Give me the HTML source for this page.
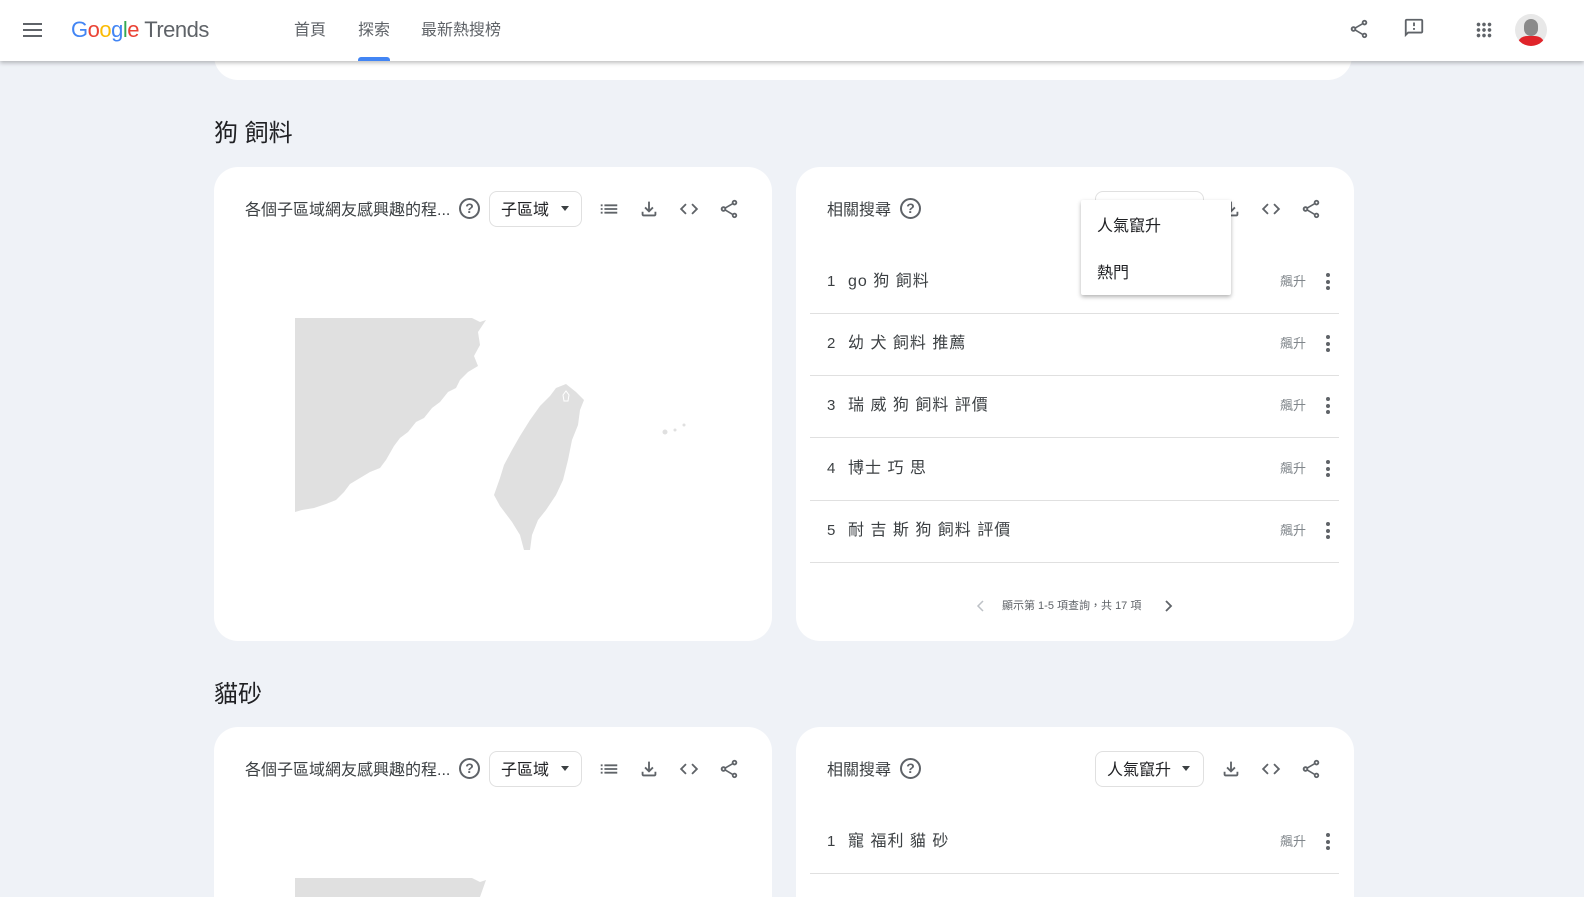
<!DOCTYPE html>
<html><head><meta charset="utf-8"><style>
*{margin:0;padding:0;box-sizing:border-box}
html{width:1584px;height:897px;overflow:hidden}
body{width:1584px;height:897px;overflow:hidden;background:#eff2f7;font-family:"Liberation Sans","Noto Sans CJK TC",sans-serif;color:#202124;position:relative;line-height:1.2}
.a{position:absolute}
.hdr{left:0;top:0;width:1584px;height:61px;background:#fff;box-shadow:0 2px 4px rgba(0,0,0,.25);z-index:5}
.card{background:#fff;border-radius:24px}
.ic{position:absolute;width:22px;height:22px;fill:#5f6368}
.sel{position:absolute;border:1px solid #e0e0e0;border-radius:8px;height:36px;font-size:16px;padding:9px 0 0 11px;line-height:20px}
.tri{position:absolute;width:0;height:0;border-left:4.5px solid transparent;border-right:4.5px solid transparent;border-top:5px solid #3c4043}
.t16{font-size:16px;color:#3c4043;line-height:20px;transform:translateY(3px)}
.row{position:absolute;left:810px;width:529px;height:62px;border-bottom:1px solid #e0e0e0}
.row .n{position:absolute;left:17px;top:20px;font-size:15px;line-height:20px;color:#3c4043}
.row .q{position:absolute;left:38px;top:20px;font-size:16px;line-height:20px;color:#3c4043;letter-spacing:1px}
.row .s{position:absolute;left:470px;top:21px;font-size:13px;line-height:18px;color:#80868b}
.dots{position:absolute;left:516px;top:21px;width:5px}
.dots i{display:block;width:4px;height:4px;border-radius:2px;background:#5f6368;margin-bottom:2.5px}
.help{position:absolute;width:21px;height:21px;border:2px solid #5f6368;border-radius:50%;font-size:14px;font-weight:bold;color:#5f6368;text-align:center;line-height:17px}
</style></head><body>
<div class="a hdr">
 <div class="a" style="left:23px;top:23px;width:19px"><div style="height:2px;background:#5f6368;margin-bottom:4px"></div><div style="height:2px;background:#5f6368;margin-bottom:4px"></div><div style="height:2px;background:#5f6368"></div></div>
 <div class="a" style="left:71px;top:17px;font-size:22px;letter-spacing:-0.5px"><span style="color:#4285f4">G</span><span style="color:#ea4335">o</span><span style="color:#fbbc05">o</span><span style="color:#4285f4">g</span><span style="color:#34a853">l</span><span style="color:#ea4335">e</span> <span style="color:#5f6368">Trends</span></div>
 <div class="a t16" style="left:294px;top:18px;color:#5f6368">首頁</div>
 <div class="a t16" style="left:358px;top:18px;color:#5f6368">探索</div>
 <div class="a" style="left:358px;top:57px;width:32px;height:4px;background:#4285f4;border-radius:3px 3px 0 0"></div>
 <div class="a t16" style="left:421px;top:18px;color:#5f6368">最新熱搜榜</div>
 <svg class="ic" style="left:1348px;top:18px" viewBox="0 0 24 24"><path d="M18 16.08c-.76 0-1.44.3-1.96.77L8.91 12.7c.05-.23.09-.46.09-.7s-.04-.47-.09-.7l7.05-4.11c.54.5 1.25.81 2.04.81 1.66 0 3-1.34 3-3s-1.34-3-3-3-3 1.34-3 3c0 .24.04.47.09.7L8.04 9.81C7.5 9.31 6.79 9 6 9c-1.66 0-3 1.34-3 3s1.34 3 3 3c.79 0 1.5-.31 2.04-.81l7.12 4.16c-.05.21-.08.43-.08.65 0 1.61 1.31 2.92 2.92 2.92s2.92-1.31 2.92-2.92-1.31-2.92-2.92-2.92zM18 4c.55 0 1 .45 1 1s-.45 1-1 1-1-.45-1-1 .45-1 1-1zM6 13c-.55 0-1-.45-1-1s.45-1 1-1 1 .45 1 1-.45 1-1 1zm12 7.02c-.55 0-1-.45-1-1s.45-1 1-1 1 .45 1 1-.45 1-1 1z"/></svg>
 <svg class="ic" style="left:1403px;top:17px" viewBox="0 0 24 24"><path d="M20 2H4c-1.1 0-1.99.9-1.99 2L2 22l4-4h14c1.1 0 2-.9 2-2V4c0-1.1-.9-2-2-2zm0 14H5.17L4 17.17V4h16v12zM11 12h2v2h-2zm0-6h2v4h-2z"/></svg>
 <svg class="ic" style="left:1473px;top:19px" viewBox="0 0 24 24"><path d="M6 8c1.1 0 2-.9 2-2s-.9-2-2-2-2 .9-2 2 .9 2 2 2zm6 12c1.1 0 2-.9 2-2s-.9-2-2-2-2 .9-2 2 .9 2 2 2zm-6 0c1.1 0 2-.9 2-2s-.9-2-2-2-2 .9-2 2 .9 2 2 2zm0-6c1.1 0 2-.9 2-2s-.9-2-2-2-2 .9-2 2 .9 2 2 2zm6 0c1.1 0 2-.9 2-2s-.9-2-2-2-2 .9-2 2 .9 2 2 2zm4-8c0 1.1.9 2 2 2s2-.9 2-2-.9-2-2-2-2 .9-2 2zm-4 2c1.1 0 2-.9 2-2s-.9-2-2-2-2 .9-2 2 .9 2 2 2zm6 6c1.1 0 2-.9 2-2s-.9-2-2-2-2 .9-2 2 .9 2 2 2zm0 6c1.1 0 2-.9 2-2s-.9-2-2-2-2 .9-2 2 .9 2 2 2z"/></svg>
 <div class="a" style="left:1515px;top:14px;width:32px;height:32px;border-radius:50%;overflow:hidden;background:#e8e8e8">
  <div class="a" style="left:9px;top:5px;width:14px;height:17px;border-radius:7px;background:#8a8a8a"></div>
  <div class="a" style="left:2px;top:22px;width:28px;height:14px;border-radius:10px 10px 0 0;background:#e0242a"></div>
 </div>
</div>

<div class="a card" style="left:214px;top:20px;width:1138px;height:60px"></div>

<div class="a" style="left:214px;top:119px;font-size:24px;line-height:30px;color:#202124">狗 飼料</div>
<div class="a" style="left:214px;top:680px;font-size:24px;line-height:30px;color:#202124">貓砂</div>

<div class="a card" style="left:214px;top:167px;width:558px;height:474px"></div>
<div class="a card" style="left:796px;top:167px;width:558px;height:474px"></div>
<div class="a card" style="left:214px;top:727px;width:558px;height:200px"></div>
<div class="a card" style="left:796px;top:727px;width:558px;height:200px"></div>

<div class="a t16" style="left:245px;top:198px">各個子區域網友感興趣的程...</div>
<div class="help" style="left:459px;top:198px">?</div>
<div class="sel" style="left:489px;top:191px;width:93px">子區域</div><div class="tri" style="left:561px;top:206px"></div>
<svg class="ic" style="left:598px;top:198px" viewBox="0 0 24 24"><path d="M3 13h2v-2H3v2zm0 4h2v-2H3v2zm0-8h2V7H3v2zm4 4h14v-2H7v2zm0 4h14v-2H7v2zM7 7v2h14V7H7z"/></svg>
<svg class="ic" style="left:638px;top:198px" viewBox="0 0 24 24"><path d="M18 15v3H6v-3H4v3c0 1.1.9 2 2 2h12c1.1 0 2-.9 2-2v-3h-2zm-1-4l-1.41-1.41L13 12.17V4h-2v8.17L8.41 9.59 7 11l5 5 5-5z"/></svg>
<svg class="ic" style="left:678px;top:198px" viewBox="0 0 24 24"><path d="M9.4 16.6L4.8 12l4.6-4.6L8 6l-6 6 6 6 1.4-1.4zm5.2 0l4.6-4.6-4.6-4.6L16 6l6 6-6 6-1.4-1.4z"/></svg>
<svg class="ic" style="left:718px;top:198px" viewBox="0 0 24 24"><path d="M18 16.08c-.76 0-1.44.3-1.96.77L8.91 12.7c.05-.23.09-.46.09-.7s-.04-.47-.09-.7l7.05-4.11c.54.5 1.25.81 2.04.81 1.66 0 3-1.34 3-3s-1.34-3-3-3-3 1.34-3 3c0 .24.04.47.09.7L8.04 9.81C7.5 9.31 6.79 9 6 9c-1.66 0-3 1.34-3 3s1.34 3 3 3c.79 0 1.5-.31 2.04-.81l7.12 4.16c-.05.21-.08.43-.08.65 0 1.61 1.31 2.92 2.92 2.92s2.92-1.31 2.92-2.92-1.31-2.92-2.92-2.92zM18 4c.55 0 1 .45 1 1s-.45 1-1 1-1-.45-1-1 .45-1 1-1zM6 13c-.55 0-1-.45-1-1s.45-1 1-1 1 .45 1 1-.45 1-1 1zm12 7.02c-.55 0-1-.45-1-1s.45-1 1-1 1 .45 1 1-.45 1-1 1z"/></svg>

<div class="a t16" style="left:245px;top:758px">各個子區域網友感興趣的程...</div>
<div class="help" style="left:459px;top:758px">?</div>
<div class="sel" style="left:489px;top:751px;width:93px">子區域</div><div class="tri" style="left:561px;top:766px"></div>
<svg class="ic" style="left:598px;top:758px" viewBox="0 0 24 24"><path d="M3 13h2v-2H3v2zm0 4h2v-2H3v2zm0-8h2V7H3v2zm4 4h14v-2H7v2zm0 4h14v-2H7v2zM7 7v2h14V7H7z"/></svg>
<svg class="ic" style="left:638px;top:758px" viewBox="0 0 24 24"><path d="M18 15v3H6v-3H4v3c0 1.1.9 2 2 2h12c1.1 0 2-.9 2-2v-3h-2zm-1-4l-1.41-1.41L13 12.17V4h-2v8.17L8.41 9.59 7 11l5 5 5-5z"/></svg>
<svg class="ic" style="left:678px;top:758px" viewBox="0 0 24 24"><path d="M9.4 16.6L4.8 12l4.6-4.6L8 6l-6 6 6 6 1.4-1.4zm5.2 0l4.6-4.6-4.6-4.6L16 6l6 6-6 6-1.4-1.4z"/></svg>
<svg class="ic" style="left:718px;top:758px" viewBox="0 0 24 24"><path d="M18 16.08c-.76 0-1.44.3-1.96.77L8.91 12.7c.05-.23.09-.46.09-.7s-.04-.47-.09-.7l7.05-4.11c.54.5 1.25.81 2.04.81 1.66 0 3-1.34 3-3s-1.34-3-3-3-3 1.34-3 3c0 .24.04.47.09.7L8.04 9.81C7.5 9.31 6.79 9 6 9c-1.66 0-3 1.34-3 3s1.34 3 3 3c.79 0 1.5-.31 2.04-.81l7.12 4.16c-.05.21-.08.43-.08.65 0 1.61 1.31 2.92 2.92 2.92s2.92-1.31 2.92-2.92-1.31-2.92-2.92-2.92zM18 4c.55 0 1 .45 1 1s-.45 1-1 1-1-.45-1-1 .45-1 1-1zM6 13c-.55 0-1-.45-1-1s.45-1 1-1 1 .45 1 1-.45 1-1 1zm12 7.02c-.55 0-1-.45-1-1s.45-1 1-1 1 .45 1 1-.45 1-1 1z"/></svg>

<svg class="a" style="left:280px;top:300px" width="420" height="597" viewBox="280 300 420 597">
 <g fill="#e0e0e0">
 <polygon points="295,318 472,318 480,322 486,320 478,332 480,345 474,356 478,366 468,372 460,380 456,388 448,392 440,402 432,408 424,418 416,422 408,432 400,438 394,446 386,460 380,468 370,472 360,478 350,484 344,492 336,500 326,504 314,508 302,510 295,512"/>
 <polygon points="556,388 566,384 576,392 584,400 580,410 578,425 572,440 568,460 563,480 556,495 546,510 538,520 532,535 530,550 524,550 520,535 512,522 500,506 494,495 500,478 504,465 512,450 520,436 530,420 540,406 550,396"/>
 <polygon points="295,878 472,878 480,882 486,880 480,897 295,897"/>
 <circle cx="665" cy="432" r="2.5"/><circle cx="675" cy="430" r="1.5"/><circle cx="684" cy="425" r="1.5"/>
 </g>
 <path d="M563 395 l3 -4 3 4 -1 6 -4 0z" fill="none" stroke="#fff" stroke-width="1"/>
</svg>

<div class="a t16" style="left:827px;top:198px">相關搜尋</div>
<div class="help" style="left:900px;top:198px">?</div>
<div class="sel" style="left:1095px;top:191px;width:109px"></div>
<svg class="ic" style="left:1220px;top:198px" viewBox="0 0 24 24"><path d="M18 15v3H6v-3H4v3c0 1.1.9 2 2 2h12c1.1 0 2-.9 2-2v-3h-2zm-1-4l-1.41-1.41L13 12.17V4h-2v8.17L8.41 9.59 7 11l5 5 5-5z"/></svg>
<svg class="ic" style="left:1260px;top:198px" viewBox="0 0 24 24"><path d="M9.4 16.6L4.8 12l4.6-4.6L8 6l-6 6 6 6 1.4-1.4zm5.2 0l4.6-4.6-4.6-4.6L16 6l6 6-6 6-1.4-1.4z"/></svg>
<svg class="ic" style="left:1300px;top:198px" viewBox="0 0 24 24"><path d="M18 16.08c-.76 0-1.44.3-1.96.77L8.91 12.7c.05-.23.09-.46.09-.7s-.04-.47-.09-.7l7.05-4.11c.54.5 1.25.81 2.04.81 1.66 0 3-1.34 3-3s-1.34-3-3-3-3 1.34-3 3c0 .24.04.47.09.7L8.04 9.81C7.5 9.31 6.79 9 6 9c-1.66 0-3 1.34-3 3s1.34 3 3 3c.79 0 1.5-.31 2.04-.81l7.12 4.16c-.05.21-.08.43-.08.65 0 1.61 1.31 2.92 2.92 2.92s2.92-1.31 2.92-2.92-1.31-2.92-2.92-2.92zM18 4c.55 0 1 .45 1 1s-.45 1-1 1-1-.45-1-1 .45-1 1-1zM6 13c-.55 0-1-.45-1-1s.45-1 1-1 1 .45 1 1-.45 1-1 1zm12 7.02c-.55 0-1-.45-1-1s.45-1 1-1 1 .45 1 1-.45 1-1 1z"/></svg>

<div class="row" style="top:252px"><span class="n">1</span><span class="q">go 狗 飼料</span><span class="s">飆升</span><div class="dots"><i></i><i></i><i></i></div></div>
<div class="row" style="top:314px"><span class="n">2</span><span class="q">幼 犬 飼料 推薦</span><span class="s">飆升</span><div class="dots"><i></i><i></i><i></i></div></div>
<div class="row" style="top:376px"><span class="n">3</span><span class="q">瑞 威 狗 飼料 評價</span><span class="s">飆升</span><div class="dots"><i></i><i></i><i></i></div></div>
<div class="row" style="top:439px"><span class="n">4</span><span class="q">博士 巧 思</span><span class="s">飆升</span><div class="dots"><i></i><i></i><i></i></div></div>
<div class="row" style="top:501px"><span class="n">5</span><span class="q">耐 吉 斯 狗 飼料 評價</span><span class="s">飆升</span><div class="dots"><i></i><i></i><i></i></div></div>

<svg class="a" style="left:976px;top:600px" width="10" height="12" viewBox="0 0 10 12"><path d="M7 1L2 6l5 5" fill="none" stroke="#bdc1c6" stroke-width="1.5"/></svg>
<div class="a" style="left:1002px;top:599px;font-size:11px;line-height:15px;color:#5f6368">顯示第 1-5 項查詢，共 17 項</div>
<svg class="a" style="left:1164px;top:600px" width="10" height="12" viewBox="0 0 10 12"><path d="M2 1l5 5-5 5" fill="none" stroke="#5f6368" stroke-width="1.8"/></svg>

<div class="a" style="left:1081px;top:200px;width:150px;height:95px;background:#fff;box-shadow:0 2px 4px rgba(0,0,0,.3);border-radius:2px;z-index:3">
 <div class="a" style="left:16px;top:17px;font-size:16px;line-height:20px">人氣竄升</div>
 <div class="a" style="left:16px;top:64px;font-size:16px;line-height:20px">熱門</div>
</div>

<div class="a t16" style="left:827px;top:758px">相關搜尋</div>
<div class="help" style="left:900px;top:758px">?</div>
<div class="sel" style="left:1095px;top:751px;width:109px">人氣竄升</div><div class="tri" style="left:1182px;top:766px"></div>
<svg class="ic" style="left:1220px;top:758px" viewBox="0 0 24 24"><path d="M18 15v3H6v-3H4v3c0 1.1.9 2 2 2h12c1.1 0 2-.9 2-2v-3h-2zm-1-4l-1.41-1.41L13 12.17V4h-2v8.17L8.41 9.59 7 11l5 5 5-5z"/></svg>
<svg class="ic" style="left:1260px;top:758px" viewBox="0 0 24 24"><path d="M9.4 16.6L4.8 12l4.6-4.6L8 6l-6 6 6 6 1.4-1.4zm5.2 0l4.6-4.6-4.6-4.6L16 6l6 6-6 6-1.4-1.4z"/></svg>
<svg class="ic" style="left:1300px;top:758px" viewBox="0 0 24 24"><path d="M18 16.08c-.76 0-1.44.3-1.96.77L8.91 12.7c.05-.23.09-.46.09-.7s-.04-.47-.09-.7l7.05-4.11c.54.5 1.25.81 2.04.81 1.66 0 3-1.34 3-3s-1.34-3-3-3-3 1.34-3 3c0 .24.04.47.09.7L8.04 9.81C7.5 9.31 6.79 9 6 9c-1.66 0-3 1.34-3 3s1.34 3 3 3c.79 0 1.5-.31 2.04-.81l7.12 4.16c-.05.21-.08.43-.08.65 0 1.61 1.31 2.92 2.92 2.92s2.92-1.31 2.92-2.92-1.31-2.92-2.92-2.92zM18 4c.55 0 1 .45 1 1s-.45 1-1 1-1-.45-1-1 .45-1 1-1zM6 13c-.55 0-1-.45-1-1s.45-1 1-1 1 .45 1 1-.45 1-1 1zm12 7.02c-.55 0-1-.45-1-1s.45-1 1-1 1 .45 1 1-.45 1-1 1z"/></svg>
<div class="row" style="top:812px"><span class="n">1</span><span class="q">寵 福利 貓 砂</span><span class="s">飆升</span><div class="dots"><i></i><i></i><i></i></div></div>
</body></html>
